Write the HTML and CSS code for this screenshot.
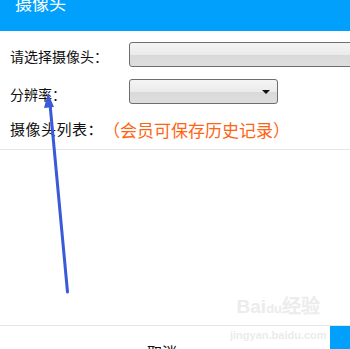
FILE: index.html
```html
<!DOCTYPE html>
<html lang="zh-CN">
<head>
    <meta charset="UTF-8">
    <title>摄像头</title>
    <link rel="stylesheet" href="styles.css">
</head>
<body>
    <div class="dialog">
        <div class="dialog-header">
            <h2>摄像头</h2>
        </div>

        <div class="dialog-body">
            <div class="form-row row-camera">
                <label>请选择摄像头：</label>
                <div class="select select-wide"></div>
            </div>
            <div class="form-row row-res">
                <label>分辨率：</label>
                <div class="select select-short"><span class="caret"></span></div>
            </div>
            <div class="form-row row-list">
                <label>摄像头列表：</label>
                <span class="hint">（会员可保存历史记录）</span>
            </div>
        </div>

        <div class="camera-list"></div>

        <div class="dialog-footer">
            <button class="btn-cancel">取消</button>
            <button class="btn-ok">确定</button>
        </div>

        <!-- watermark -->
        <div class="watermark">
            <span class="wm-logo">Bai<b>du</b>经验</span>
            <span class="wm-url">jingyan.baidu.com</span>
        </div>

        <!-- annotation arrow -->
        <svg class="arrow" width="350" height="349" viewBox="0 0 350 349">
            <line x1="67.5" y1="292" x2="50" y2="104" stroke="#3a5ad8" stroke-width="3" stroke-linecap="round"/>
            <polygon points="48,93 44,108 54,107" fill="#3a5ad8"/>
        </svg>
    </div>
</body>
</html>
```

FILE: styles.css
```css
body {
    margin: 0;
    padding: 0;
    font-family: "Noto Sans CJK SC", "Noto Sans", sans-serif;
    background: #fff;
    color: #111;
}

.dialog {
    position: relative;
    width: 350px;
    height: 349px;
    overflow: hidden;
}

.dialog-header {
    height: 31px;
    background-color: #00a0fc;
    overflow: hidden;
}

.dialog-header h2 {
    margin: -9px 0 0 15px;
    font-size: 17px;
    font-weight: normal;
    line-height: 24px;
    color: #fff;
}

.dialog-body {
    padding: 11px 0 0 10px;
}

.form-row {
    display: flex;
    align-items: center;
}

.form-row label {
    width: 119px;
    font-size: 14px;
    line-height: 20px;
    flex-shrink: 0;
}

.row-camera {
    height: 25px;
}

.row-camera label {
    margin-top: 2px;
}

.row-res {
    margin-top: 12px;
    height: 25px;
}

.row-res label {
    margin-top: 5px;
}

.row-list {
    margin-top: 14px;
    height: 22px;
}

.row-list label {
    width: auto;
    font-size: 15px;
    letter-spacing: 0.5px;
}

.hint {
    font-size: 17px;
    color: #ff6414;
}

.select {
    position: relative;
    height: 23px;
    border: 1px solid #6e6e6e;
    border-radius: 3px;
    background: linear-gradient(#f4f4f4, #ebebeb 50%, #d9d9d9 52%, #dedede);
    box-sizing: content-box;
}

.select-wide {
    width: 250px;
    flex-shrink: 0;
}

.select-short {
    width: 147px;
}

.caret {
    position: absolute;
    right: 7px;
    top: 10px;
    width: 0;
    height: 0;
    border-left: 4px solid transparent;
    border-right: 4px solid transparent;
    border-top: 4px solid #111;
}

.camera-list {
    margin-top: 9px;
    height: 175px;
    border-top: 1px solid #e6e6e6;
}

.dialog-footer {
    display: flex;
    justify-content: flex-end;
    align-items: flex-start;
    height: 26px;
    border-top: 1px solid #e6e6e6;
}

.btn-cancel {
    margin: 16px 153px 0 0;
    padding: 0;
    border: none;
    background: none;
    font-family: inherit;
    font-size: 15px;
    line-height: 20px;
    color: #111;
}

.btn-ok {
    width: 20px;
    height: 26px;
    padding: 0;
    border: none;
    background-color: #00a0fc;
    color: #00a0fc;
    font-size: 1px;
    overflow: hidden;
}

.watermark {
    position: absolute;
    left: 230px;
    top: 296px;
    display: flex;
    flex-direction: column;
    align-items: center;
    color: #ececec;
    pointer-events: none;
}

.wm-logo {
    font-family: "Liberation Sans", sans-serif;
    font-size: 19px;
    font-weight: bold;
    line-height: 22px;
}

.wm-logo b {
    font-size: 13px;
}

.wm-url {
    margin-top: 8px;
    font-family: "Liberation Sans", sans-serif;
    font-size: 11px;
    font-weight: bold;
    line-height: 14px;
}

.arrow {
    position: absolute;
    left: 0;
    top: 0;
    pointer-events: none;
}
```
